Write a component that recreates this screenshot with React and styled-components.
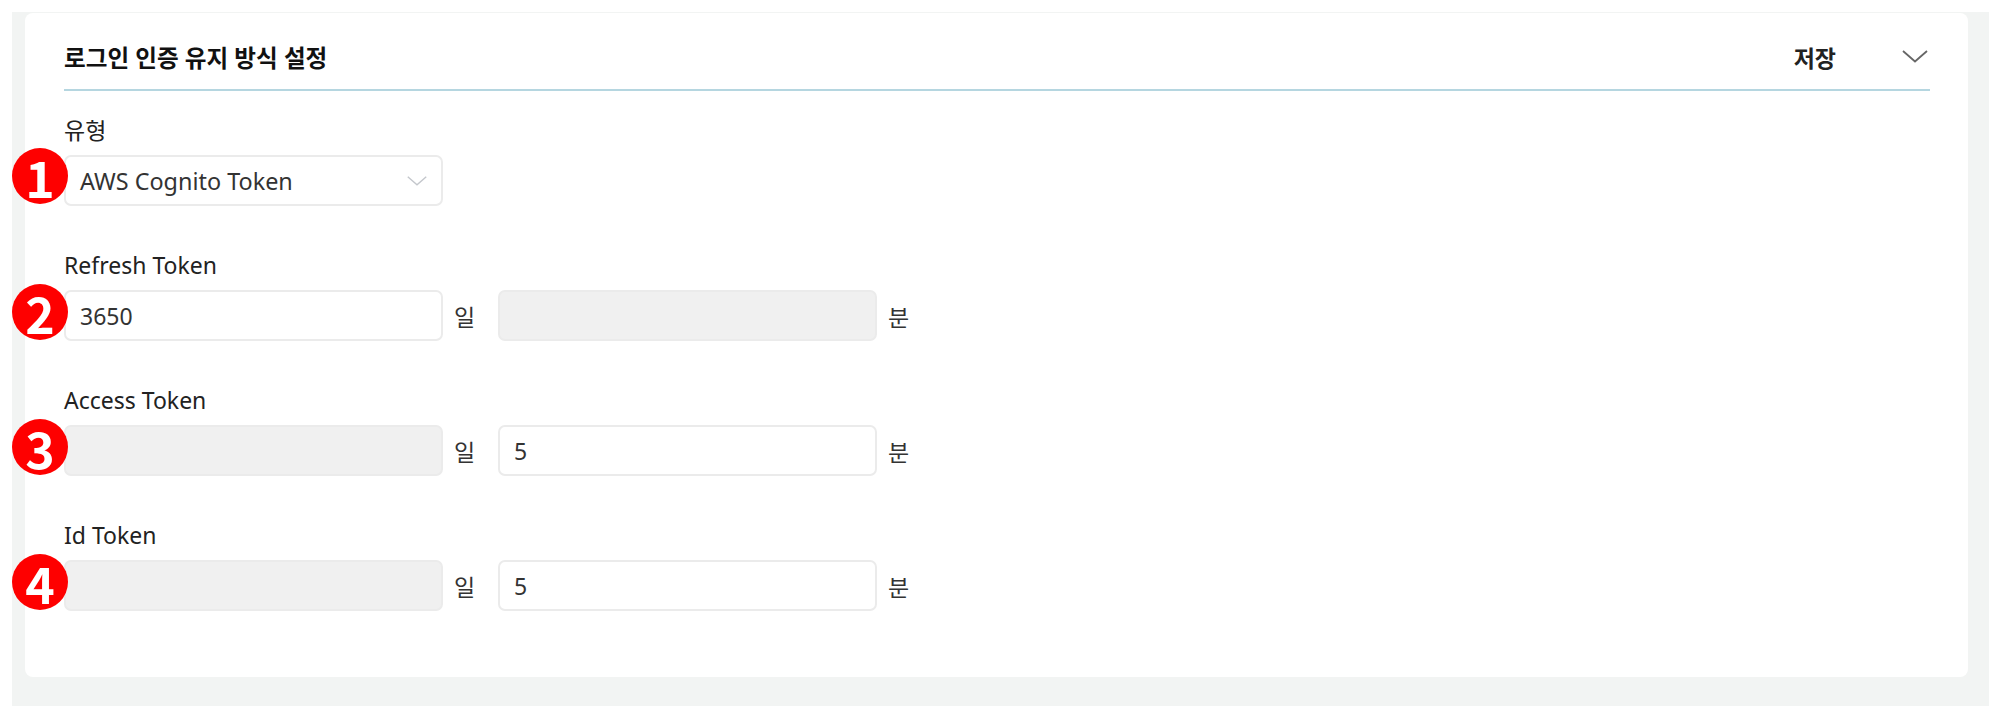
import React from 'react';
import styled, { createGlobalStyle } from 'styled-components';

const GlobalStyle = createGlobalStyle`
  html, body {
    margin: 0;
    background: #fff;
    font-family: "Noto Sans", "Noto Sans CJK KR", sans-serif;
    color: #222;
  }
`;

const Page = styled.div`
  width: 1977px;
  height: 694px;
  margin: 12px 0 0 12px;
  padding: 1px 21px 29px 13px;
  box-sizing: border-box;
  background: #f2f4f3;
`;

const Card = styled.section`
  height: 664px;
  padding: 0 38px 0 39px;
  box-sizing: border-box;
  background: #fff;
  border-radius: 8px;
`;

const Header = styled.header`
  height: 65px;
  padding-top: 11px;
  display: flex;
  align-items: center;
  justify-content: space-between;
  border-bottom: 2px solid #b5d6e0;
`;

const Title = styled.h2`
  margin: 0;
  font-size: 23.6px;
  font-weight: 700;
  color: #111;
`;

const Actions = styled.div`
  display: flex;
  align-items: center;
  gap: 66px;
  padding-right: 2px;
`;

const SaveButton = styled.button`
  padding: 0;
  border: none;
  background: none;
  font: 700 23px "Noto Sans", "Noto Sans CJK KR", sans-serif;
  color: #222;
  cursor: pointer;
`;

const Form = styled.div`
  display: flex;
  flex-direction: column;
  gap: 32px;
  padding-top: 12px;
`;

const Field = styled.div`
  position: relative;
  height: 103px;
  display: flex;
  flex-direction: column;
  justify-content: flex-end;
  gap: 12px;
`;

const Label = styled.label`
  font-size: 23px;
  line-height: 26px;
  color: #222;
`;

const Row = styled.div`
  display: flex;
  align-items: center;
`;

const Input = styled.input`
  width: 379px;
  height: 51px;
  padding: 0 14px;
  box-sizing: border-box;
  border: 2px solid #ebebeb;
  border-radius: 7px;
  background: ${props => (props.disabled ? '#f0f0f0' : '#fff')};
  font: 23px "Noto Sans", "Noto Sans CJK KR", sans-serif;
  color: #333;
  outline: none;
`;

const Select = styled.div`
  width: 379px;
  height: 51px;
  padding: 0 14px;
  box-sizing: border-box;
  display: flex;
  align-items: center;
  justify-content: space-between;
  border: 2px solid #ebebeb;
  border-radius: 7px;
  background: #fff;
  font-size: 23.4px;
  color: #333;
`;

const Unit = styled.span`
  width: 55px;
  padding-left: 11px;
  box-sizing: border-box;
  font-size: 23px;
  color: #333;
`;

const Badge = styled.span`
  position: absolute;
  left: -52px;
  bottom: ${props => props.$bottom}px;
  width: 56px;
  height: 56px;
  display: flex;
  align-items: center;
  justify-content: center;
  border-radius: 50%;
  background: #fe0000;
  color: #fff;
  font-family: "Noto Sans CJK KR", sans-serif;
  font-size: 50px;
  font-weight: 700;
  line-height: 1;
`;

const Chevron = ({ size, color }) => (
  <svg width={size} height={size / 2 + 2} viewBox="0 0 26 14" fill="none">
    <path d="M1 1.5 13 12 25 1.5" stroke={color} strokeWidth="1.8" />
  </svg>
);

const fields = [
  { label: 'Refresh Token', number: 2, day: '3650', min: null },
  { label: 'Access Token', number: 3, day: null, min: '5' },
  { label: 'Id Token', number: 4, day: null, min: '5' },
];

const TokenInput = ({ value }) => (
  <Input disabled={value === null} defaultValue={value ?? ''} />
);

export default function App() {
  return (
    <>
      <GlobalStyle />
      <Page>
        <Card>
          <Header>
            <Title>로그인 인증 유지 방식 설정</Title>
            <Actions>
              <SaveButton>저장</SaveButton>
              <Chevron size={26} color="#666" />
            </Actions>
          </Header>
          <Form>
            <Field>
              <Label>유형</Label>
              <Select>
                AWS Cognito Token
                <Chevron size={20} color="#c4c7cc" />
              </Select>
              <Badge $bottom={2}>1</Badge>
            </Field>
            {fields.map(field => (
              <Field key={field.label}>
                <Label>{field.label}</Label>
                <Row>
                  <TokenInput value={field.day} />
                  <Unit>일</Unit>
                  <TokenInput value={field.min} />
                  <Unit>분</Unit>
                </Row>
                <Badge $bottom={1}>{field.number}</Badge>
              </Field>
            ))}
          </Form>
        </Card>
      </Page>
    </>
  );
}
